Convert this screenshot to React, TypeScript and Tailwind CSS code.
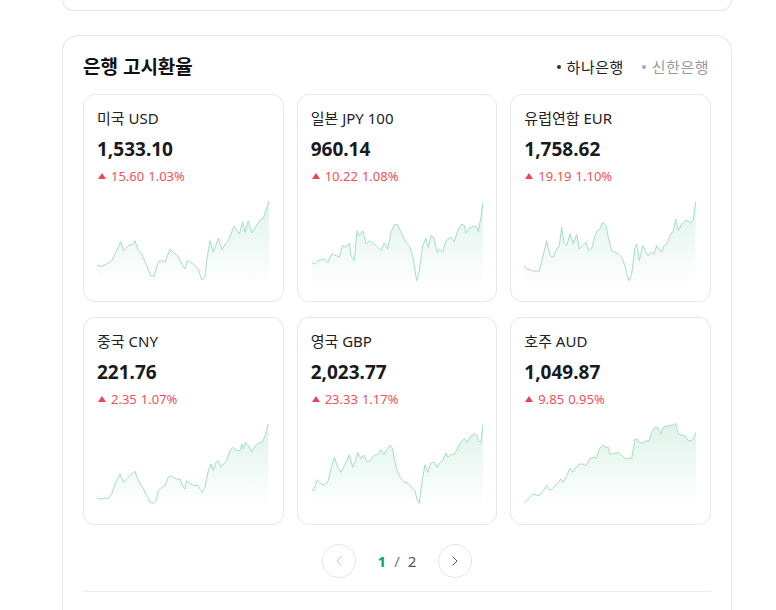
import { ChevronLeft, ChevronRight } from "lucide-react";

type Pt = [number, number];

interface Rate {
  name: string;
  price: string;
  diff: string;
  pct: string;
  // traced points (3x zoom coords), zoom origin and chart origin on the page
  pts: Pt[];
  zo: Pt;
  co: Pt;
}

const rates: Rate[] = [
  {
    name: "미국 USD",
    price: "1,533.10",
    diff: "15.60",
    pct: "1.03%",
    zo: [90, 190],
    co: [97, 199],
    pts: [
      [21, 230], [35, 232], [50, 225], [65, 215], [80, 185], [92, 158], [100, 185], [118, 168],
      [128, 167], [135, 155], [145, 185], [155, 195], [170, 230], [182, 260], [192, 262],
      [205, 218], [218, 215], [225, 220], [240, 180], [255, 195], [265, 203], [275, 225],
      [285, 240], [292, 215], [310, 225], [325, 240], [335, 273], [345, 263], [350, 215],
      [360, 155], [370, 190], [385, 148], [397, 183], [405, 165], [415, 155], [432, 112],
      [448, 135], [458, 98], [465, 130], [475, 95], [485, 132], [500, 108], [515, 88],
      [520, 88], [537, 35],
    ],
  },
  {
    name: "일본 JPY 100",
    price: "960.14",
    diff: "10.22",
    pct: "1.08%",
    zo: [290, 90],
    co: [310, 199],
    pts: [
      [62, 520], [70, 525], [80, 515], [100, 510], [110, 520], [122, 495], [135, 500], [145, 505],
      [155, 470], [165, 475], [175, 462], [180, 500], [190, 515], [198, 425], [205, 440],
      [215, 425], [225, 465], [235, 455], [250, 465], [265, 480], [270, 485], [280, 462],
      [290, 480], [300, 430], [312, 405], [322, 410], [330, 430], [345, 460], [355, 470],
      [365, 500], [372, 545], [377, 575], [385, 545], [395, 470], [405, 448], [412, 475],
      [420, 440], [428, 445], [438, 490], [445, 480], [455, 490], [465, 455], [480, 445],
      [490, 458], [500, 425], [512, 405], [520, 410], [525, 432], [535, 418], [548, 412],
      [558, 415], [562, 428], [570, 385], [578, 338],
    ],
  },
  {
    name: "유럽연합 EUR",
    price: "1,758.62",
    diff: "19.19",
    pct: "1.10%",
    zo: [500, 90],
    co: [524, 199],
    pts: [
      [72, 528], [80, 540], [90, 542], [95, 545], [110, 547], [118, 545], [128, 505], [140, 455],
      [150, 500], [160, 505], [170, 480], [178, 470], [185, 415], [192, 460], [200, 470],
      [210, 435], [220, 465], [230, 435], [238, 480], [248, 470], [258, 460], [265, 485],
      [275, 478], [285, 440], [292, 425], [300, 420], [308, 400], [318, 410], [325, 445],
      [335, 485], [345, 490], [355, 495], [365, 505], [375, 530], [380, 555], [387, 575],
      [395, 555], [405, 475], [410, 465], [418, 515], [428, 470], [438, 490], [445, 500],
      [455, 490], [462, 495], [470, 470], [478, 480], [485, 490], [492, 470], [500, 465],
      [510, 440], [520, 425], [527, 390], [535, 425], [545, 405], [555, 395], [565, 395],
      [572, 402], [580, 390], [587, 338],
    ],
  },
  {
    name: "중국 CNY",
    price: "221.76",
    diff: "2.35",
    pct: "1.07%",
    zo: [80, 310],
    co: [97, 422],
    pts: [
      [52, 568], [65, 570], [75, 567], [85, 568], [95, 555], [105, 525], [120, 495], [130, 520],
      [145, 505], [155, 495], [165, 487], [175, 515], [185, 530], [200, 560], [210, 578],
      [220, 583], [228, 575], [235, 545], [245, 535], [255, 530], [265, 505], [270, 500],
      [280, 505], [290, 510], [300, 510], [310, 535], [315, 540], [320, 515], [330, 525],
      [345, 530], [355, 530], [362, 545], [367, 550], [375, 535], [385, 485], [393, 465],
      [400, 485], [408, 460], [415, 455], [422, 475], [430, 465], [440, 455], [450, 425],
      [458, 415], [465, 420], [472, 425], [480, 425], [485, 405], [490, 420], [497, 400],
      [505, 410], [515, 428], [525, 410], [540, 400], [548, 398], [555, 380], [565, 345],
    ],
  },
  {
    name: "영국 GBP",
    price: "2,023.77",
    diff: "23.33",
    pct: "1.17%",
    zo: [290, 310],
    co: [310, 422],
    pts: [
      [62, 540], [68, 545], [78, 512], [90, 525], [100, 528], [110, 520], [120, 480], [130, 445],
      [140, 475], [150, 490], [160, 470], [175, 437], [185, 475], [192, 460], [200, 430],
      [210, 450], [218, 438], [228, 458], [238, 455], [248, 440], [262, 435], [270, 422],
      [278, 438], [288, 420], [298, 408], [305, 420], [310, 450], [318, 485], [328, 505],
      [340, 520], [350, 522], [362, 535], [372, 545], [378, 570], [385, 583], [392, 525],
      [402, 467], [410, 490], [420, 462], [430, 460], [438, 475], [448, 460], [455, 455],
      [465, 432], [470, 445], [478, 438], [490, 436], [500, 418], [510, 400], [520, 388],
      [528, 400], [540, 380], [550, 375], [558, 380], [562, 395], [570, 400], [578, 345],
    ],
  },
  {
    name: "호주 AUD",
    price: "1,049.87",
    diff: "9.85",
    pct: "0.95%",
    zo: [500, 310],
    co: [524, 422],
    pts: [
      [72, 583], [85, 570], [100, 555], [110, 560], [120, 558], [130, 545], [140, 528], [150, 545],
      [160, 535], [172, 525], [182, 510], [190, 520], [200, 500], [210, 478], [218, 490],
      [228, 475], [240, 465], [248, 465], [258, 470], [270, 448], [280, 445], [290, 448],
      [298, 420], [308, 408], [318, 415], [325, 415], [330, 435], [340, 435], [355, 430],
      [365, 440], [375, 448], [385, 450], [395, 448], [405, 390], [412, 390], [420, 402],
      [430, 400], [440, 395], [448, 395], [455, 370], [465, 355], [475, 358], [483, 375],
      [490, 355], [500, 350], [510, 350], [520, 348], [527, 343], [535, 375], [545, 378],
      [555, 380], [565, 395], [575, 395], [582, 385], [588, 370],
    ],
  },
];

const W = 172;
const H = 88;

function Spark({ r, id }: { r: Rate; id: string }) {
  const local = r.pts.map(([x, y]) => [
    Math.max(0, Math.min(W, r.zo[0] + x / 3 - r.co[0])),
    r.zo[1] + y / 3 - r.co[1],
  ]);
  const line = local.map(([x, y], i) => `${i ? "L" : "M"}${x.toFixed(1)} ${y.toFixed(1)}`).join(" ");
  const first = local[0];
  const last = local[local.length - 1];
  const area = `${line} L${last[0].toFixed(1)} ${H} L${first[0].toFixed(1)} ${H} Z`;
  return (
    <svg width={W} height={H} viewBox={`0 0 ${W} ${H}`} className="block">
      <defs>
        <linearGradient id={id} x1="0" y1="0" x2="0" y2="1">
          <stop offset="0%" stopColor="#37b37e" stopOpacity="0.16" />
          <stop offset="100%" stopColor="#37b37e" stopOpacity="0" />
        </linearGradient>
      </defs>
      <path d={area} fill={`url(#${id})`} />
      <path d={line} fill="none" stroke="#a3dfc1" strokeWidth="1" strokeLinejoin="round" />
    </svg>
  );
}

function RateCard({ r, i }: { r: Rate; i: number }) {
  return (
    <div className="flex flex-col rounded-[12px] border border-[#e6e6e6] bg-white px-[13px] pt-[13px] pb-[15px]">
      <div className="text-[15px] leading-[20px] text-[#222]">{r.name}</div>
      <div className="mt-[8px] text-[19px] leading-[26px] font-bold text-[#1a1a1a]">{r.price}</div>
      <div className="mt-[5px] flex items-center text-[13px] leading-[18px] text-[#f2515a]">
        <svg width="8" height="6" viewBox="0 0 8 6" className="mr-[5px] ml-[1px]">
          <path d="M4 0 L8 6 L0 6 Z" fill="#f04452" />
        </svg>
        <span>{r.diff}</span>
        <span className="ml-[4px]">{r.pct}</span>
      </div>
      <div className="mt-[13px]">
        <Spark r={r} id={`g${i}`} />
      </div>
    </div>
  );
}

export default function App() {
  return (
    <div
      className="min-h-[610px] bg-white"
      style={{ fontFamily: '"Noto Sans", "Noto Sans CJK KR", sans-serif' }}
    >
      <div className="ml-[62px] w-[670px]">
        <div className="h-[11px] rounded-b-[16px] border-x border-b border-[#e6e6e6]" />
        <div className="mt-[24px] rounded-t-[16px] border-x border-t border-[#e6e6e6] px-[20px] pt-[18px] pb-[20px]">
          <div className="flex items-center justify-between">
            <h2 className="text-[19px] leading-[26px] font-bold text-[#111]">은행 고시환율</h2>
            <div className="mr-[2px] flex items-center gap-[18px] text-[15px] leading-[20px]">
              <span className="flex items-center text-[#222]">
                <span className="mr-[6px] inline-block h-[4px] w-[4px] rounded-full bg-[#333]" />
                <span className="tracking-[0.5px]">하나은행</span>
              </span>
              <span className="flex items-center text-[#9a9a9a]">
                <span className="mr-[6px] inline-block h-[4px] w-[4px] rounded-full bg-[#aaa]" />
                <span className="tracking-[0.5px]">신한은행</span>
              </span>
            </div>
          </div>
          <div className="mt-[14px] grid grid-cols-3 gap-x-[13px] gap-y-[15px]">
            {rates.map((r, i) => (
              <RateCard key={r.name} r={r} i={i} />
            ))}
          </div>
          <div className="mt-[19px] flex items-center justify-center">
            <button className="flex h-[34px] w-[34px] items-center justify-center rounded-full border border-[#e6e6e6] text-[#c8c8c8]">
              <ChevronLeft size={16} strokeWidth={1.5} />
            </button>
            <div className="mx-[22px] flex items-center text-[15px] leading-[20px]">
              <span className="font-bold text-[#00a878]">1</span>
              <span className="mx-[8px] text-[#777]">/</span>
              <span className="text-[#555]">2</span>
            </div>
            <button className="flex h-[34px] w-[34px] items-center justify-center rounded-full border border-[#e6e6e6] text-[#555]">
              <ChevronRight size={16} strokeWidth={1.5} />
            </button>
          </div>
          <div className="mt-[13px] h-px bg-[#ececec]" />
        </div>
      </div>
    </div>
  );
}
